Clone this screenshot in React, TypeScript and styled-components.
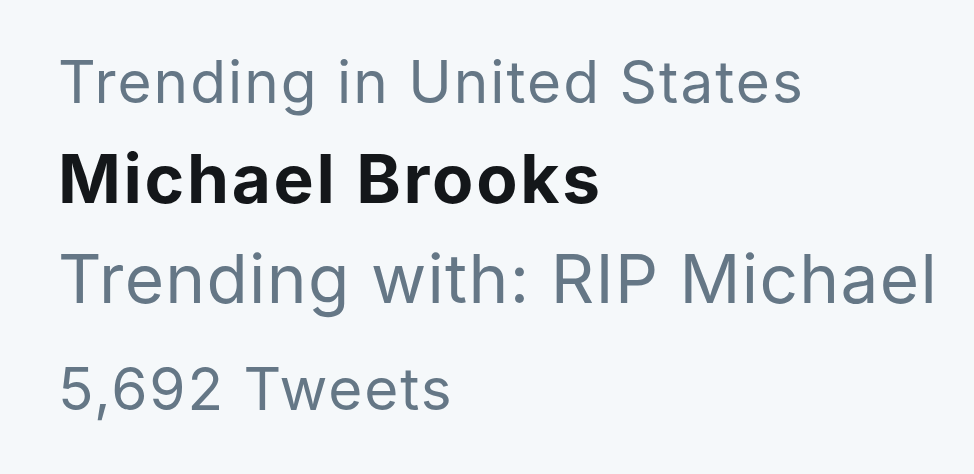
import React from "react";
import styled, { createGlobalStyle } from "styled-components";

const Global = createGlobalStyle`
  html, body { margin: 0; padding: 0; background: #f5f8fa; }
  body { font-family: Inter, "Noto Sans", sans-serif; -webkit-font-smoothing: antialiased; }
`;

const Card = styled.div`
  width: 974px;
  height: 474px;
  box-sizing: border-box;
  padding: 35px 0 0 58px;
  background: #f5f8fa;
  display: flex;
  flex-direction: column;
  overflow: hidden;
`;

const Line = styled.div<{ $size: number; $lh: number; $ls: number; $bold?: boolean; $dark?: boolean; $mt?: number }>`
  font-size: ${(p) => p.$size}px;
  line-height: ${(p) => p.$lh}px;
  letter-spacing: ${(p) => p.$ls}px;
  font-weight: ${(p) => (p.$bold ? 700 : 400)};
  color: ${(p) => (p.$dark ? "#14171a" : "#657786")};
  margin-top: ${(p) => p.$mt ?? 0}px;
  white-space: nowrap;
`;

export default function App() {
  return (
    <>
      <Global />
      <Card>
        <Line $size={58.5} $lh={94} $ls={2}>Trending in United States</Line>
        <Line $size={67.5} $lh={100} $ls={2.7} $bold $dark>Michael Brooks</Line>
        <Line $size={67.5} $lh={100} $ls={1.3}>Trending with: RIP Michael</Line>
        <Line $size={58.5} $lh={100} $ls={1.9} $mt={10}>5,692 Tweets</Line>
      </Card>
    </>
  );
}
